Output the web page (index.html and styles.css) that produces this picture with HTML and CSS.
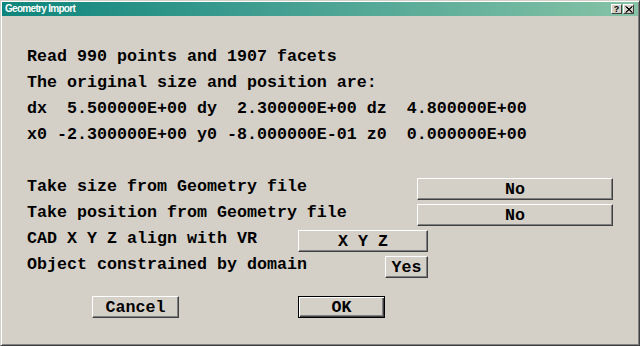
FILE: index.html
```html
<!DOCTYPE html>
<html>
<head>
<meta charset="utf-8">
<link rel="stylesheet" href="styles.css">
</head>
<body>
<div class="window">
  <div class="titlebar">
    <span class="title">Geometry Import</span>
    <div class="caption-btns">
      <span class="cbtn cbtn-help">?</span>
      <span class="cbtn cbtn-close"><svg width="8" height="7" viewBox="0 0 8 7"><path d="M0.5 0.5 L7 6.5 M1.5 0.5 L7.5 6.5 M7 0.5 L0.5 6.5 M7.5 0.5 L1 6.5" stroke="#000" stroke-width="1"/></svg></span>
    </div>
  </div>
  <div class="content">
    <div class="info">
      <div class="line">Read 990 points and 1907 facets</div>
      <div class="line">The original size and position are:</div>
      <div class="line">dx  5.500000E+00 dy  2.300000E+00 dz  4.800000E+00</div>
      <div class="line">x0 -2.300000E+00 y0 -8.000000E-01 z0  0.000000E+00</div>
    </div>
    <div class="options">
      <div class="row"><span class="label label-wide">Take size from Geometry file</span><button class="btn btn-no">No</button></div>
      <div class="row"><span class="label label-wide">Take position from Geometry file</span><button class="btn btn-no">No</button></div>
      <div class="row"><span class="label label-mid">CAD X Y Z align with VR</span><button class="btn btn-xyz">X Y Z</button></div>
      <div class="row"><span class="label label-short">Object constrained by domain</span><button class="btn btn-yes">Yes</button></div>
    </div>
    <div class="actions">
      <button class="btn btn-action">Cancel</button>
      <button class="btn btn-action btn-default">OK</button>
    </div>
  </div>
</div>
</body>
</html>
```
FILE: styles.css
```css
html, body {
  margin: 0;
  padding: 0;
  background: #d4d0c8;
}
.window {
  width: 640px;
  height: 346px;
  box-sizing: border-box;
  background: #d4d0c8;
  border: 1px solid;
  border-color: #d4d0c8 #404040 #404040 #d4d0c8;
  box-shadow: inset 1px 1px #ffffff, inset -1px -1px #808080;
  padding: 1px;
  display: flex;
  flex-direction: column;
}
.titlebar {
  height: 14px;
  background: linear-gradient(to right, #0e857c, #3f9d90 40%, #86c3a6);
  display: flex;
  align-items: center;
  justify-content: space-between;
  padding: 0 4px 0 3px;
}
.title {
  font-family: "Liberation Sans", Arial, sans-serif;
  font-weight: bold;
  font-size: 10px;
  letter-spacing: -0.7px;
  color: #ffffff;
  line-height: 14px;
}
.caption-btns {
  display: flex;
  gap: 1px;
}
.cbtn {
  width: 11px;
  height: 10px;
  box-sizing: border-box;
  background: #d4d0c8;
  border: 1px solid;
  border-color: #ffffff #404040 #404040 #ffffff;
  display: flex;
  align-items: center;
  justify-content: center;
  font-family: "Liberation Sans", Arial, sans-serif;
  font-weight: bold;
  font-size: 9px;
  line-height: 8px;
  color: #000;
}
.content {
  padding: 28px 0 0 25px;
  font-family: "Liberation Mono", "Courier New", monospace;
  font-weight: bold;
  font-size: 16.67px;
  color: #000;
}
.line {
  line-height: 26px;
  height: 26px;
  white-space: pre;
}
.info {
  margin-bottom: 26px;
}
.row {
  display: flex;
  align-items: flex-start;
  height: 26px;
}
.label {
  line-height: 26px;
  white-space: pre;
  flex: none;
}
.label-wide { width: 390px; }
.label-mid { width: 271px; }
.label-short { width: 358px; }
.btn {
  margin: 4px 0 0 0;
  padding: 0;
  height: 22px;
  box-sizing: border-box;
  background: #d4d0c8;
  border: 1px solid;
  border-color: #ffffff #404040 #404040 #ffffff;
  box-shadow: inset -1px -1px #808080;
  font-family: "Liberation Mono", "Courier New", monospace;
  font-weight: bold;
  font-size: 16.67px;
  line-height: 19px;
  color: #000;
  text-align: center;
  white-space: pre;
}
.btn-no { width: 196px; }
.btn-xyz { width: 130px; }
.btn-yes { width: 43px; }
.actions {
  display: flex;
  gap: 119px;
  padding: 18px 0 0 65px;
}
.btn-action {
  width: 87px;
  margin: 0;
}
.btn-default {
  border-color: #000000;
  box-shadow: inset 1px 1px #ffffff, inset -1px -1px #404040, inset -2px -2px #808080;
}
```
